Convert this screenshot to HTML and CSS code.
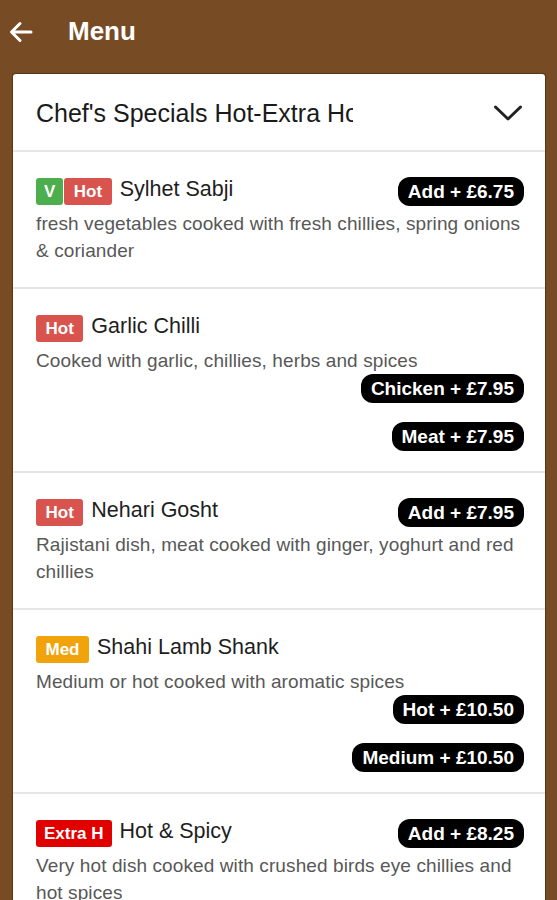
FILE: index.html
```html
<!DOCTYPE html>
<html>
<head>
<meta charset="utf-8">
<link rel="stylesheet" href="styles.css">
</head>
<body>
<header class="topbar">
  <svg class="back" width="24" height="22" viewBox="0 0 24 22"><path d="M22 11H3M11 2.5L2.5 11L11 19.5" fill="none" stroke="#fff" stroke-width="3" stroke-linecap="round" stroke-linejoin="round"/></svg>
  <h1 class="title">Menu</h1>
</header>
<main class="card">
  <div class="category">
    <span class="cat-name">Chef's Specials Hot-Extra Hot</span>
    <svg class="chev" width="30" height="18" viewBox="0 0 30 18"><path d="M2.5 3L15 15L27.5 3" fill="none" stroke="#222" stroke-width="3" stroke-linecap="round" stroke-linejoin="round"/></svg>
  </div>

  <div class="item">
    <div class="head">
      <div class="name-wrap"><span class="badge green">V</span><span class="badge red joined">Hot</span><span class="name">Sylhet Sabji</span></div>
      <span class="pill">Add + £6.75</span>
    </div>
    <p class="desc">fresh vegetables cooked with fresh chillies, spring onions &amp; coriander</p>
  </div>

  <div class="item">
    <div class="head">
      <div class="name-wrap"><span class="badge red">Hot</span><span class="name">Garlic Chilli</span></div>
    </div>
    <p class="desc">Cooked with garlic, chillies, herbs and spices</p>
    <div class="options">
      <span class="pill">Chicken + £7.95</span>
      <span class="pill">Meat + £7.95</span>
    </div>
  </div>

  <div class="item">
    <div class="head">
      <div class="name-wrap"><span class="badge red">Hot</span><span class="name">Nehari Gosht</span></div>
      <span class="pill">Add + £7.95</span>
    </div>
    <p class="desc">Rajistani dish, meat cooked with ginger, yoghurt and red chillies</p>
  </div>

  <div class="item">
    <div class="head">
      <div class="name-wrap"><span class="badge orange">Med</span><span class="name">Shahi Lamb Shank</span></div>
    </div>
    <p class="desc">Medium or hot cooked with aromatic spices</p>
    <div class="options">
      <span class="pill">Hot + £10.50</span>
      <span class="pill">Medium + £10.50</span>
    </div>
  </div>

  <div class="item">
    <div class="head">
      <div class="name-wrap"><span class="badge xred">Extra H</span><span class="name">Hot &amp; Spicy</span></div>
      <span class="pill">Add + £8.25</span>
    </div>
    <p class="desc">Very hot dish cooked with crushed birds eye chillies and hot spices</p>
  </div>
</main>
</body>
</html>
```

FILE: styles.css
```css
* { box-sizing: border-box; }
html, body { margin: 0; padding: 0; }
body {
  background: #774c24;
  font-family: "Liberation Sans", Arial, sans-serif;
  height: 900px;
  overflow: hidden;
}
.topbar {
  height: 74px;
  display: flex;
  align-items: center;
  padding: 0 0 12px 9px;
  color: #fff;
}
.back { display: block; margin-right: 35px; margin-top: 2px; }
.title {
  margin: 0;
  font-size: 26px;
  font-weight: bold;
}
.card {
  margin: 0 12px 0 13px;
  background: #fff;
  border-radius: 3px;
  box-shadow: 0 0 1px 1px rgba(60, 30, 5, 0.5);
}
.category {
  height: 78px;
  display: flex;
  align-items: center;
  justify-content: space-between;
  padding: 0 21px 0 23px;
  border-bottom: 2px solid #e6e6e6;
}
.cat-name {
  font-size: 25px;
  color: #1a1a1a;
  width: 317px;
  overflow: hidden;
  white-space: nowrap;
  margin-top: 3px;
}
.chev { display: block; margin-right: 1px; margin-top: 2px; }
.item {
  padding: 25px 21px 20px 23px;
  border-bottom: 2px solid #e6e6e6;
}
.head {
  display: flex;
  align-items: center;
  justify-content: space-between;
  height: 28px;
}
.name-wrap { display: flex; align-items: center; }
.badge {
  display: inline-block;
  height: 27px;
  line-height: 27px;
  padding: 0 8px;
  border-radius: 3px;
  color: #fff;
  font-weight: bold;
  font-size: 17px;
  margin-top: 1px;
}
.green { background: #4cae4c; }
.red { background: #d9534f; padding: 0 9.5px; }
.joined { margin-left: 1px; }
.orange { background: #f0a30a; padding: 0 9.5px; }
.xred { background: #e00000; }
.name {
  font-size: 21.5px;
  color: #1e1e1e;
  margin-left: 8px;
  margin-top: -3px;
}
.pill {
  display: inline-block;
  background: #000;
  color: #fff;
  font-weight: bold;
  font-size: 19px;
  height: 29px;
  line-height: 29px;
  padding: 0 10px;
  border-radius: 12px;
}
.desc {
  margin: 5px 0 0;
  font-size: 19px;
  letter-spacing: 0.1px;
  line-height: 27px;
  color: #585858;
}
.desc:last-child { margin-bottom: 3px; }
.options {
  display: flex;
  flex-direction: column;
  align-items: flex-end;
  gap: 19px;
  margin-top: 0;
}
```
